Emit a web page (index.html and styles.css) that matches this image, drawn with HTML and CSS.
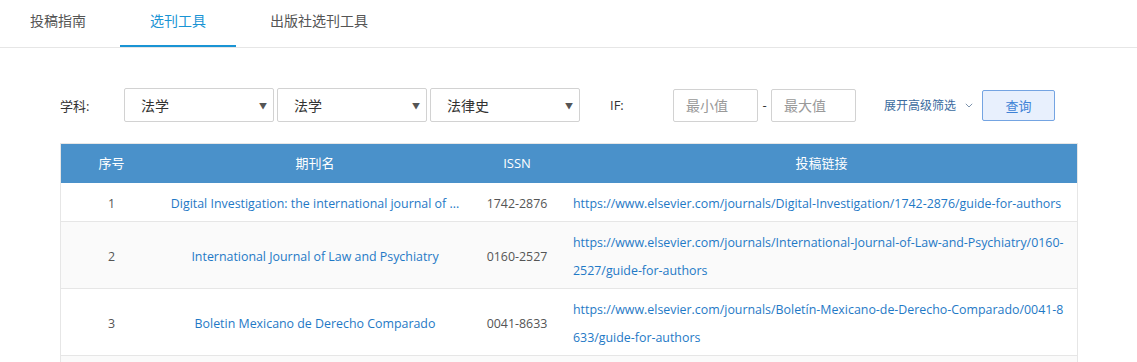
FILE: index.html
```html
<!DOCTYPE html>
<html lang="zh-CN">
<head>
    <meta charset="UTF-8">
    <meta name="viewport" content="width=device-width, initial-scale=1.0">
    <title>选刊工具</title>
    <link rel="stylesheet" href="styles.css">
</head>
<body>
    <div class="tabs">
        <a class="tab">投稿指南</a>
        <a class="tab active">选刊工具</a>
        <a class="tab">出版社选刊工具</a>
    </div>

    <div class="filter">
        <span class="label subject">学科:</span>
        <div class="select"><span>法学</span><i class="arrow">▼</i></div>
        <div class="select"><span>法学</span><i class="arrow">▼</i></div>
        <div class="select"><span>法律史</span><i class="arrow">▼</i></div>

        <span class="label if">IF:</span>
        <input class="range" type="text" placeholder="最小值">
        <span class="dash">-</span>
        <input class="range" type="text" placeholder="最大值">

        <a class="more">展开高级筛选
            <svg width="8" height="5" viewBox="0 0 8 5"><path d="M0.8 0.8l3.2 3.2 3.2-3.2" fill="none" stroke="#7d93ad" stroke-width="1"/></svg>
        </a>
        <button class="search">查询</button>
    </div>

    <div class="table">
        <div class="thead">
            <div>序号</div>
            <div>期刊名</div>
            <div>ISSN</div>
            <div>投稿链接</div>
        </div>
        <div class="row">
            <div class="num">1</div>
            <div class="name"><a>Digital Investigation: the international journal of ...</a></div>
            <div class="issn">1742-2876</div>
            <div class="link"><a>https://www.elsevier.com/journals/Digital-Investigation/1742-2876/guide-for-authors</a></div>
        </div>
        <div class="row">
            <div class="num">2</div>
            <div class="name"><a>International Journal of Law and Psychiatry</a></div>
            <div class="issn">0160-2527</div>
            <div class="link"><a>https://www.elsevier.com/journals/International-Journal-of-Law-and-Psychiatry/0160-2527/guide-for-authors</a></div>
        </div>
        <div class="row">
            <div class="num">3</div>
            <div class="name"><a>Boletin Mexicano de Derecho Comparado</a></div>
            <div class="issn">0041-8633</div>
            <div class="link"><a>https://www.elsevier.com/journals/Boletín-Mexicano-de-Derecho-Comparado/0041-8633/guide-for-authors</a></div>
        </div>
        <div class="row">
            <div class="num">4</div>
            <div class="name"><a>Crime Law and Social Change</a></div>
            <div class="issn">0925-4994</div>
            <div class="link"><a>https://www.springer.com/journal/10611</a></div>
        </div>
    </div>
</body>
</html>
```

FILE: styles.css
```css
body {
    margin: 0;
    font-family: "Open Sans", "Noto Sans CJK SC", sans-serif;
    font-size: 13px;
    color: #333;
    background-color: #ffffff;
    overflow: hidden;
}

a {
    cursor: pointer;
}

/* tabs */
.tabs {
    display: flex;
    height: 47px;
    border-bottom: 1px solid #e6e6e6;
}

.tab {
    display: block;
    box-sizing: border-box;
    height: 47px;
    padding: 0 30px;
    margin-right: 4px;
    line-height: 42px;
    font-size: 14px;
    color: #555;
    border-bottom: 2px solid transparent;
}

.tab.active {
    color: #1a94d4;
    border-bottom-color: #1a94d4;
}

/* filter */
.filter {
    display: flex;
    align-items: center;
    margin: 40px 0 0 60px;
    height: 34px;
}

.label {
    color: #333;
    font-size: 13px;
}

.label.subject {
    width: 64px;
}

.select {
    box-sizing: border-box;
    width: 150px;
    height: 34px;
    margin-right: 3px;
    padding: 0 6px 0 16px;
    display: flex;
    align-items: center;
    justify-content: space-between;
    border: 1px solid #d2d2d2;
    border-radius: 2px;
    font-size: 14px;
    color: #333;
}

.select .arrow {
    font-style: normal;
    font-size: 8px;
    color: #555;
}

.label.if {
    margin-left: 27px;
    width: 63px;
}

.range {
    box-sizing: border-box;
    width: 85px;
    height: 33px;
    padding: 0 12px;
    border: 1px solid #d2d2d2;
    border-radius: 2px;
    font-family: "Open Sans", "Noto Sans CJK SC", sans-serif;
    font-size: 14px;
    outline: none;
}

.range::placeholder {
    color: #999;
}

.dash {
    width: 13px;
    text-align: center;
    color: #333;
}

.more {
    margin-left: 28px;
    color: #3b6b9e;
    font-size: 12px;
    display: flex;
    align-items: center;
    gap: 9px;
}

.search {
    margin-left: 9px;
    width: 73px;
    height: 31px;
    background-color: #e8f0fd;
    border: 1px solid #74a4e2;
    border-radius: 2px;
    color: #3f83d6;
    font-family: "Open Sans", "Noto Sans CJK SC", sans-serif;
    font-size: 13px;
    cursor: pointer;
}

/* table */
.table {
    margin: 21px 0 0 60px;
    width: 1018px;
    border: 1px solid #e6e6e6;
    border-bottom: none;
    box-sizing: border-box;
}

.thead,
.row {
    display: grid;
    grid-template-columns: 101px 306px 98px 1fr;
}

.thead {
    height: 39px;
    line-height: 39px;
    background-color: #4a91ca;
    color: #ffffff;
    font-size: 13px;
    text-align: center;
}

.row {
    align-items: center;
    border-bottom: 1px solid #e6e6e6;
    line-height: 28px;
    font-size: 12.4px;
}

.row:nth-child(odd) {
    background-color: #fafafa;
}

.row > div {
    padding: 7px 0 3px;
}

.row a {
    color: #1f79c6;
}

.num {
    text-align: center;
    color: #555;
}

.name {
    text-align: center;
}

.issn {
    text-align: center;
    color: #555;
}

.row .link {
    padding: 7px 10px 3px 7px;
    word-break: break-all;
}
```
